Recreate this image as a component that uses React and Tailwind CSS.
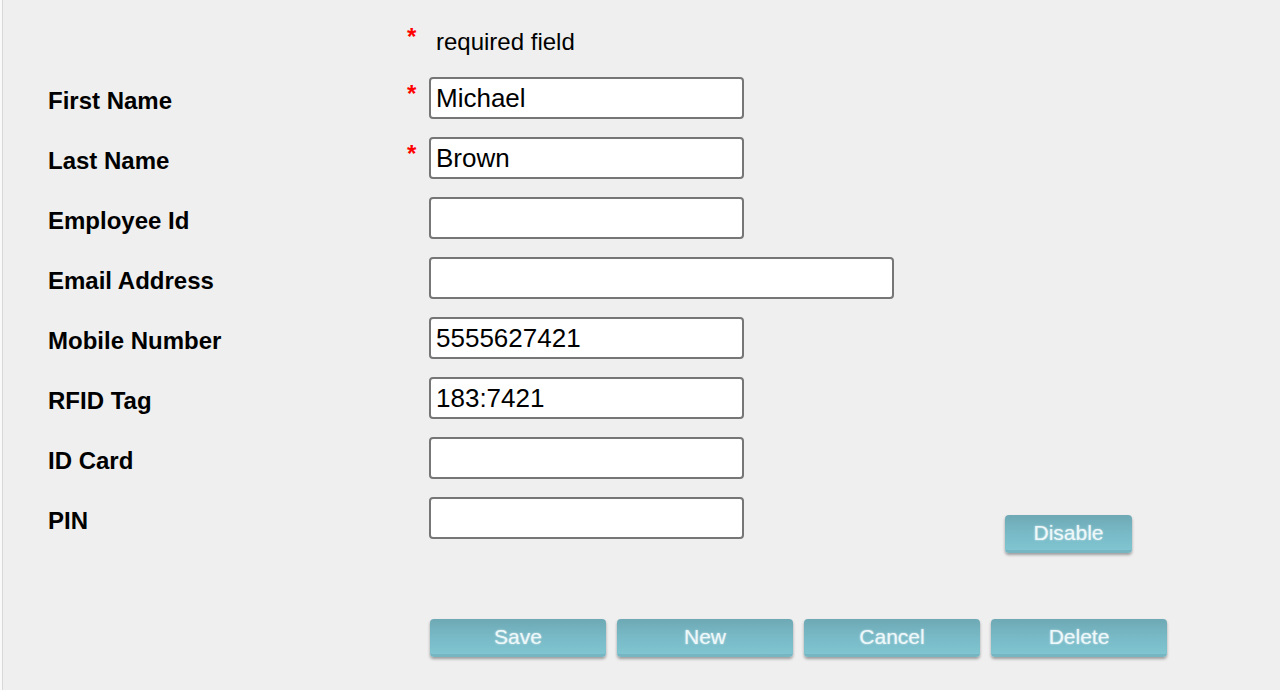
import React from "react";

const rows = [
  { label: "First Name", req: true, value: "Michael", w: "w-[315px]" },
  { label: "Last Name", req: true, value: "Brown", w: "w-[315px]" },
  { label: "Employee Id", value: "", w: "w-[315px]" },
  { label: "Email Address", value: "", w: "w-[465px]" },
  { label: "Mobile Number", value: "5555627421", w: "w-[315px]" },
  { label: "RFID Tag", value: "183:7421", w: "w-[315px]" },
  { label: "ID Card", value: "", w: "w-[315px]" },
  { label: "PIN", value: "", w: "w-[315px]", disable: true },
];

function Btn({ children, w }) {
  return (
    <button
      className={`${w} h-[38px] rounded-[4px] bg-gradient-to-b from-[#6ea9b5] via-[#78b9c6] to-[#80c5d1] border-b-[3px] border-[#76b6c3] shadow-[0_2px_3px_rgba(0,0,0,0.35)] text-[21px] leading-none text-[#eef8fa] [text-shadow:0_0_2px_rgba(255,255,255,0.7)]`}
      style={{ fontFamily: '"Liberation Sans", Arial, sans-serif' }}
    >
      {children}
    </button>
  );
}

export default function App() {
  return (
    <div
      className="w-[1280px] h-[690px] bg-[#f9f9f9] pl-[2px] overflow-hidden"
      style={{ fontFamily: '"Liberation Sans", Arial, sans-serif' }}
    >
      <div className="h-full border-l border-[#d8d8d8] bg-[#efefef] pl-[45px] pt-[23px]">
        <div className="flex h-[54px]">
          <div className="w-[359px]" />
          <div className="w-[29px] text-[24px] font-bold text-[#ff0000] leading-none pt-[2px]">*</div>
          <div className="text-[24px] text-black leading-none pt-[7px]">required field</div>
        </div>
        {rows.map((r) => (
          <div key={r.label} className="flex h-[60px]">
            <div className="w-[359px] text-[24px] font-bold text-black leading-none pt-[12px]">
              {r.label}
            </div>
            <div className="w-[22px] text-[24px] font-bold text-[#ff0000] leading-none pt-[5px]">
              {r.req ? "*" : ""}
            </div>
            <div
              className={`${r.w} h-[42px] bg-white border-2 border-[#767676] rounded-[4px] pl-[5px] pr-[6px] flex items-center text-[26px] text-black leading-none`}
            >
              {r.value}
            </div>
            {r.disable && (
              <div className="ml-[261px] pt-[18px]">
                <Btn w="w-[127px]">Disable</Btn>
              </div>
            )}
          </div>
        ))}
        <div className="flex gap-[11px] pl-[382px] pt-[62px]">
          <Btn w="w-[176px]">Save</Btn>
          <Btn w="w-[176px]">New</Btn>
          <Btn w="w-[176px]">Cancel</Btn>
          <Btn w="w-[176px]">Delete</Btn>
        </div>
      </div>
    </div>
  );
}
